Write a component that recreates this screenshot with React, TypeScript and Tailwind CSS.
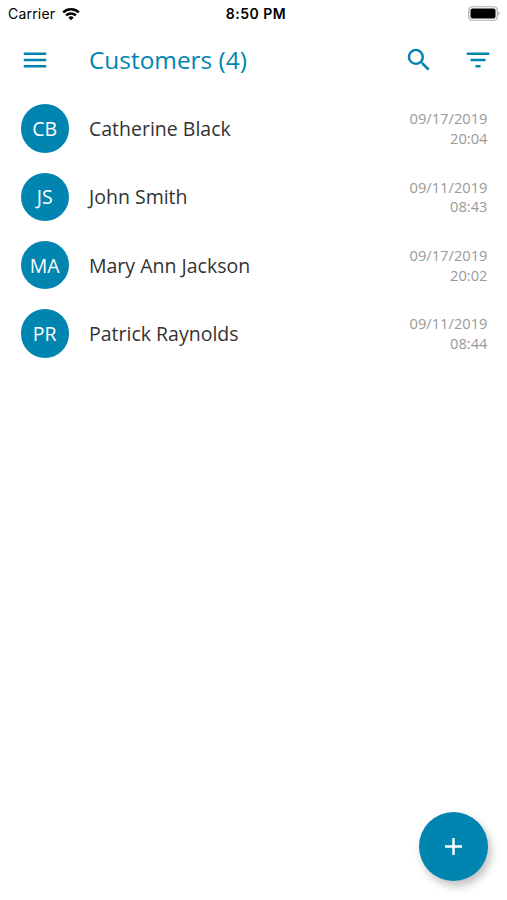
import React from "react";
import {MdFilterList, MdMenu, MdSearch} from "react-icons/md";

const customers = [
    {initials: "CB", name: "Catherine Black", date: "09/17/2019", time: "20:04"},
    {initials: "JS", name: "John Smith", date: "09/11/2019", time: "08:43"},
    {initials: "MA", name: "Mary Ann Jackson", date: "09/17/2019", time: "20:02"},
    {initials: "PR", name: "Patrick Raynolds", date: "09/11/2019", time: "08:44"},
];

const StatusBar: React.FC = () => {
    return (
        <div className="grid h-[27px] grid-cols-3 items-center pl-2 pr-[7px] font-['Inter',sans-serif] text-[14px] text-black">
            <div className="flex items-center gap-[7px]">
                <span className="tracking-[0.2px]">Carrier</span>
                <svg width="18" height="14" viewBox="0 0 18 14" fill="none" stroke="black" strokeWidth="2.5">
                    <path d="M1.2 5.3a11.3 11.3 0 0 1 15.6 0"/>
                    <path d="M4.1 8.4a7 7 0 0 1 9.8 0"/>
                    <path d="M9 13.2 6.3 10.5a4 4 0 0 1 5.4 0Z" fill="black" stroke="none"/>
                </svg>
            </div>
            <div className="pl-1 text-center font-semibold tracking-[0.5px]">8:50 PM</div>
            <div className="flex justify-end">
                <svg width="32" height="15" viewBox="0 0 32 15">
                    <rect x="0.75" y="0.75" width="28.5" height="13.5" rx="3.5" fill="none" stroke="#b0b0b0" strokeWidth="1.2"/>
                    <rect x="2.5" y="2.5" width="25" height="10" rx="2" fill="black"/>
                    <path d="M30.3 5.5c1.6.7 1.6 3.3 0 4Z" fill="#a0a0a0"/>
                </svg>
            </div>
        </div>
    );
};

const App: React.FC = () => {
    return (
        <div className="relative h-[900px] w-[507px] overflow-hidden bg-white font-['Open_Sans',sans-serif]">
            <StatusBar/>
            <header className="flex h-[66px] items-center pl-[20px] pr-[14px] text-[#0084b0]">
                <MdMenu className="size-[30px]"/>
                <h1 className="ml-[39px] flex-1 text-[24.4px]">Customers (4)</h1>
                <MdSearch className="size-[30px]"/>
                <MdFilterList className="ml-[29px] size-[30px]"/>
            </header>
            <ul className="pt-[1.2px]">
                {customers.map((customer) => (
                    <li key={customer.name} className="flex h-[68.4px] items-center pl-[20.5px] pr-[19.5px]">
                        <div className="flex size-[48.5px] items-center justify-center rounded-full bg-[#0084b0] text-[19.5px] text-white">
                            {customer.initials}
                        </div>
                        <div className="ml-5 flex-1 text-[19.5px] text-[#333333]">{customer.name}</div>
                        <div className="pt-px text-right text-[14.7px] leading-[19.6px] text-[#999999]">
                            <div>{customer.date}</div>
                            <div>{customer.time}</div>
                        </div>
                    </li>
                ))}
            </ul>
            <button className="absolute right-[19px] bottom-[19px] flex size-[69px] items-center justify-center rounded-full bg-[#0084b0] shadow-[3px_5px_8px_rgba(0,0,0,0.25)]">
                <svg width="19" height="19" viewBox="0 0 19 19" stroke="white" strokeWidth="2.4">
                    <path d="M9.5 1v17M1 9.5h17"/>
                </svg>
            </button>
        </div>
    );
};

export default App;
